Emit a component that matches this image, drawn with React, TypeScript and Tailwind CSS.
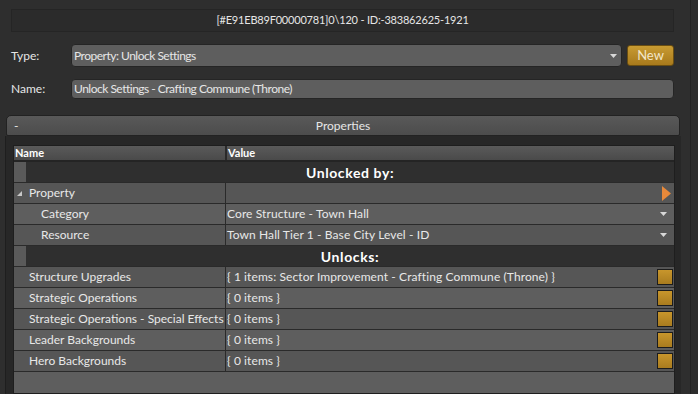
import React from "react";

type Row = { name: string; value: string; indent?: number; kind?: "drop" | "gold" | "expand" };

const FONT = "font-['Lato','Noto_Sans',sans-serif]";

const DownTri = () => (
  <svg width="7" height="4" viewBox="0 0 7 4" className="shrink-0">
    <path d="M0 0 H7 L3.5 4 Z" fill="#d8d8d8" />
  </svg>
);

const Gold = () => (
  <div className="h-[16px] w-[16px] shrink-0 border border-[#1c1c1c] bg-gradient-to-b from-[#c8962c] to-[#a97c1f]" />
);

const SectionRow = ({ label }: { label: string }) => (
  <div className="flex h-[21px] border-b border-[#2a2a2a] bg-[#2f2f2f]">
    <div className="w-[12px] bg-[#5a5a5a]" />
    <div className="flex flex-1 items-center justify-center text-[14px] font-bold tracking-[0.6px] text-white">{label}</div>
  </div>
);

const DataRow = ({ row, odd }: { row: Row; odd: boolean }) => (
  <div className={`flex h-[21px] border-b border-[#2a2a2a] text-[12px] text-[#e8e8e8] ${odd ? "bg-[#5e5e5e]" : "bg-[#565656]"}`}>
    <div className="flex w-[212px] items-center border-r border-[#2a2a2a]" style={{ paddingLeft: row.indent ?? 15 }}>
      {row.kind === "expand" && (
        <svg width="5" height="5" viewBox="0 0 5 5" className="ml-[-12px] mr-[7px]">
          <path d="M5 0 V5 H0 Z" fill="#c8c8c8" />
        </svg>
      )}
      <span className="whitespace-nowrap">{row.name}</span>
    </div>
    <div className="flex flex-1 items-center justify-between pl-[1px] pr-[1px] tracking-[0.1px]">
      <span className="whitespace-nowrap">{row.value}</span>
      {row.kind === "drop" && <span className="mr-[6px]"><DownTri /></span>}
      {row.kind === "gold" && <Gold />}
      {row.kind === "expand" && (
        <svg width="9" height="15" viewBox="0 0 9 15" className="mr-[2px]">
          <path d="M0 0 L9 7.5 L0 15 Z" fill="#e8893a" />
        </svg>
      )}
    </div>
  </div>
);

const unlockedBy: Row[] = [
  { name: "Property", value: "", indent: 15, kind: "expand" },
  { name: "Category", value: "Core Structure - Town Hall", indent: 27, kind: "drop" },
  { name: "Resource", value: "Town Hall Tier 1 - Base City Level - ID", indent: 27, kind: "drop" },
];

const unlocks: Row[] = [
  { name: "Structure Upgrades", value: "{ 1 items: Sector Improvement - Crafting Commune (Throne) }", kind: "gold" },
  { name: "Strategic Operations", value: "{ 0 items }", kind: "gold" },
  { name: "Strategic Operations - Special Effects", value: "{ 0 items }", kind: "gold" },
  { name: "Leader Backgrounds", value: "{ 0 items }", kind: "gold" },
  { name: "Hero Backgrounds", value: "{ 0 items }", kind: "gold" },
];

export default function App() {
  return (
    <div className={`flex h-[394px] w-[698px] overflow-hidden bg-[#2e2e2e] text-[#e6e6e6] ${FONT}`}>
      <div className="flex w-[691px] shrink-0 flex-col border-r border-[#232323]">
        <div className="ml-[11px] mt-[9px] flex h-[23px] w-[663px] items-center justify-center border border-[#252525] bg-[#2b2b2b] text-[11px] tracking-[-0.2px]">
          [#E91EB89F00000781]0\120 - ID:-383862625-1921
        </div>

        <div className="mt-[12px] flex items-center">
          <div className="w-[71px] pl-[11px] text-[12px]">Type:</div>
          <div className="flex h-[23px] w-[551px] items-center justify-between rounded-[4px] border border-[#252525] bg-[#5e5e5e] pl-[2px] pr-[4px] text-[12px] tracking-[-0.5px]">
            <span>Property: Unlock Settings</span>
            <DownTri />
          </div>
          <div className="ml-[5px] flex h-[21px] w-[47px] items-center justify-center rounded-[3px] border border-[#6a4e12] bg-gradient-to-b from-[#c89b32] to-[#a87a1c] text-[13px] text-[#f3e6c8]">
            New
          </div>
        </div>

        <div className="mt-[12px] flex items-center">
          <div className="w-[71px] pl-[11px] text-[12px]">Name:</div>
          <div className="flex h-[20px] w-[603px] items-center rounded-[4px] border border-[#252525] bg-[#5e5e5e] pl-[2px] text-[12px] tracking-[-0.5px]">
            Unlock Settings - Crafting Commune (Throne)
          </div>
        </div>

        <div className="ml-[5px] mt-[16px] flex w-[676px] flex-1 flex-col">
          <div className="mx-[1px] flex h-[21px] items-center rounded-t-[5px] rounded-b-[2px] border border-[#222] bg-gradient-to-b from-[#595959] to-[#4c4c4c] text-[12px]">
            <span className="w-[14px] pl-[7px]">-</span>
            <span className="flex-1 pr-[14px] text-center">Properties</span>
          </div>
          <div className="flex flex-1 flex-col border-l border-[#1e1e1e] bg-[#272727] pl-[7px] pr-[6px] pt-[9px]">
            <div className="flex flex-1 flex-col border border-[#1e1e1e] bg-[#5e5e5e]">
              <div className="flex h-[16px] border-b-[2px] border-[#242424] bg-gradient-to-b from-[#5a5a5a] to-[#4a4a4a] text-[11px] font-bold text-white">
                <div className="w-[213px] border-r-[2px] border-[#2a2a2a] pl-[1px] leading-[14px]">Name</div>
                <div className="flex-1 pl-[1px] leading-[14px]">Value</div>
              </div>
              <SectionRow label="Unlocked by:" />
              {unlockedBy.map((r, i) => (
                <DataRow key={r.name} row={r} odd={i % 2 === 1} />
              ))}
              <SectionRow label="Unlocks:" />
              {unlocks.map((r, i) => (
                <DataRow key={r.name} row={r} odd={i % 2 === 1} />
              ))}
            </div>
          </div>
        </div>
      </div>
      <div className="flex-1 bg-[#2d2d2d]" />
    </div>
  );
}
